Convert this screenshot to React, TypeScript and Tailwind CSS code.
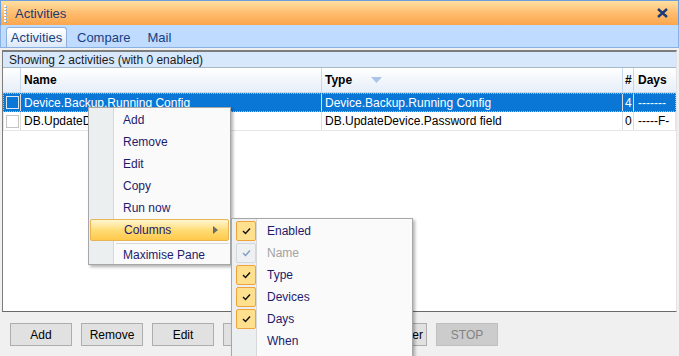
import React from "react";

type Row = { name: string; type: string; count: string; days: string; selected?: boolean };

const rows: Row[] = [
  { name: "Device.Backup.Running Config", type: "Device.Backup.Running Config", count: "4", days: "-------", selected: true },
  { name: "DB.UpdateDevice.Password field", type: "DB.UpdateDevice.Password field", count: "0", days: "-----F-" },
];

const buttons = ["Add", "Remove", "Edit", "Copy", "Run now", "Scheduler"];

const menuItems = ["Add", "Remove", "Edit", "Copy", "Run now"];

const columnItems: { label: string; checked: boolean; disabled?: boolean }[] = [
  { label: "Enabled", checked: true },
  { label: "Name", checked: true, disabled: true },
  { label: "Type", checked: true },
  { label: "Devices", checked: true },
  { label: "Days", checked: true },
  { label: "When", checked: false },
];

const Check = ({ color }: { color: string }) => (
  <svg width="9" height="8" viewBox="0 0 9 8">
    <path d="M1 4 L3.5 6.5 L8 1.5" fill="none" stroke={color} strokeWidth="1.4" />
  </svg>
);

const ContextMenu = () => (
  <div className="absolute left-[88px] top-[107px] w-[143px] h-[158px] bg-[#fafafa] border border-[#a7a7a7] shadow-[2px_2px_3px_rgba(0,0,0,0.3)] flex">
    <div className="w-[25px] bg-[#eceff0] border-r border-[#d5d9dc]" />
    <div className="absolute inset-0 pt-[1px]">
      {menuItems.map((item) => (
        <div key={item} className="h-[22px] flex items-center pl-[34px] text-[#1e1a6e]">
          {item}
        </div>
      ))}
      <div className="h-[22px] mx-[1px] flex items-center pl-[33px] pr-[10px] text-[#1e1a6e] rounded-[2px] border border-[#e8b455] bg-gradient-to-b from-[#fff6cf] via-[#ffdc76] to-[#ffc94a]">
        <span className="flex-1">Columns</span>
        <svg width="5" height="8" viewBox="0 0 5 8">
          <path d="M0 0 L5 4 L0 8 Z" fill="#6b6b6b" />
        </svg>
      </div>
      <div className="h-[4px] flex items-center pl-[27px] pr-[1px]">
        <div className="h-[1px] w-full bg-[#d5d9dc]" />
      </div>
      <div className="h-[20px] flex items-center pl-[34px] text-[#1e1a6e]">Maximise Pane</div>
    </div>
  </div>
);

const ColumnsMenu = () => (
  <div className="absolute left-[231px] top-[218px] w-[182px] h-[150px] bg-[#fafafa] border border-[#a7a7a7] shadow-[2px_2px_3px_rgba(0,0,0,0.3)] flex">
    <div className="w-[25px] bg-[#eceff0] border-r border-[#d5d9dc]" />
    <div className="absolute inset-0 pt-[1px]">
      {columnItems.map((c) => (
        <div key={c.label} className="h-[22px] flex items-center">
          <div className="w-[26px] flex justify-center pl-[2px]">
            {c.checked && (
              <div
                className={
                  c.disabled
                    ? "w-[20px] h-[20px] rounded-[2px] border border-[#d3d8dc] bg-[#eef0f1] flex items-center justify-center"
                    : "w-[20px] h-[20px] rounded-[2px] border border-[#f2a23c] bg-[#ffe08f] flex items-center justify-center"
                }
              >
                <Check color={c.disabled ? "#7f9cc8" : "#111"} />
              </div>
            )}
          </div>
          <span className={c.disabled ? "pl-[9px] text-[#a3a3a3]" : "pl-[9px] text-[#1e1a6e]"}>{c.label}</span>
        </div>
      ))}
    </div>
  </div>
);

export default function App() {
  return (
    <div className="relative w-[679px] h-[356px] overflow-hidden bg-[#f0f0f0] font-['Liberation_Sans',Arial,sans-serif] text-[12px] leading-none">
      {/* title bar */}
      <div className="h-[25px] flex items-center border-t border-x border-[#6d9ddb] bg-gradient-to-b from-[#ffe0a3] via-[#ffbd6e] to-[#fba64c]">
        <div className="ml-[3px] w-[3px] h-[19px] flex flex-col justify-between py-[1px]">
          {[0, 1, 2, 3, 4, 5].map((i) => (
            <div key={i} className="w-[2px] h-[2px] bg-white shadow-[1px_1px_0_#8ab0e0]" />
          ))}
        </div>
        <span className="ml-[8px] text-[13px] text-[#1b3a73]">Activities</span>
        <div className="flex-1" />
        <svg className="mr-[10px]" width="11" height="10" viewBox="0 0 11 10">
          <path d="M1 1 L10 9 M10 1 L1 9" stroke="#1a3b78" strokeWidth="2.4" />
        </svg>
      </div>

      {/* tab strip */}
      <div className="h-[23px] flex items-end pl-[5px] bg-[#bfdbff] border-x border-b border-[#8ab1e4]">
        <div className="h-[20px] w-[61px] flex items-center justify-center rounded-t-[3px] border-x border-t border-[#8eb0da] bg-gradient-to-b from-[#ffffff] to-[#dce9f9] text-[13px] text-[#17407e]">
          Activities
        </div>
        <div className="h-[20px] flex items-center pl-[10px] text-[13px] text-[#17407e]">Compare</div>
        <div className="h-[20px] flex items-center pl-[17px] text-[13px] text-[#17407e]">Mail</div>
      </div>

      {/* grid */}
      <div className="mt-[2px] mx-[2px] h-[262px] flex flex-col bg-white border-t-2 border-l border-[#7d7d7d] border-b border-b-[#6a6a6a] border-r border-r-[#e3e3e3]">
        <div className="h-[16px] flex items-center pl-[6px] bg-[#d7e7fc] border-b border-[#a9b6c4] text-[#1b1b1b]">
          Showing 2 activities (with 0 enabled)
        </div>
        <div className="h-[25px] flex items-center bg-gradient-to-b from-[#ffffff] to-[#e6eef8] border-b border-[#c8d6e6] font-bold text-black">
          <div className="w-[18px] h-full border-r border-[#c6d7ee]" />
          <div className="w-[301px] h-full flex items-center pl-[3px] border-r border-[#c6d7ee]">Name</div>
          <div className="w-[301px] h-full flex items-center pl-[3px] border-r border-[#c6d7ee]">
            <span>Type</span>
            <svg className="ml-[19px]" width="11" height="6" viewBox="0 0 11 6">
              <path d="M0 0 L11 0 L5.5 6 Z" fill="#a9c4e8" />
            </svg>
          </div>
          <div className="w-[11px] h-full flex items-center pl-[2px] border-r border-[#c6d7ee]">#</div>
          <div className="flex-1 h-full flex items-center pl-[4px]">Days</div>
        </div>
        {rows.map((r) => (
          <div
            key={r.name}
            className={
              r.selected
                ? "h-[19px] flex items-center bg-[#0a76d6] text-white border border-dotted border-[#e7b37a]"
                : "h-[19px] flex items-center bg-white text-black border-x border-b border-[#e6e6e6]"
            }
          >
            <div className="w-[17px] h-full flex items-center justify-center border-r border-[#dcdcdc]">
              <div
                className={
                  r.selected
                    ? "w-[13px] h-[13px] border border-[#d9e6f4] bg-[#0a76d6]"
                    : "w-[13px] h-[13px] border border-[#c4c4c4] bg-white"
                }
              />
            </div>
            <div className="w-[301px] h-full flex items-center pl-[3px] border-r border-[#dcdcdc] whitespace-nowrap overflow-hidden">
              {r.name}
            </div>
            <div className="w-[301px] h-full flex items-center pl-[3px] border-r border-[#dcdcdc] whitespace-nowrap overflow-hidden">
              {r.type}
            </div>
            <div className="w-[11px] h-full flex items-center pl-[2px] border-r border-[#dcdcdc]">{r.count}</div>
            <div className="flex-1 h-full flex items-center pl-[4px] whitespace-nowrap overflow-hidden">{r.days}</div>
          </div>
        ))}
        <div className="flex-1" />
      </div>

      {/* bottom buttons */}
      <div className="pt-[11px] pl-[10px] flex gap-[9px]">
        {buttons.map((b) => (
          <div
            key={b}
            className="w-[62px] h-[23px] flex items-center justify-center bg-[#e1e1e1] border border-[#adadad] text-black"
          >
            {b}
          </div>
        ))}
        <div className="w-[62px] h-[23px] flex items-center justify-center bg-[#cccccc] border border-[#bfbfbf] text-[#838383]">
          STOP
        </div>
      </div>

      <ContextMenu />
      <ColumnsMenu />
    </div>
  );
}
